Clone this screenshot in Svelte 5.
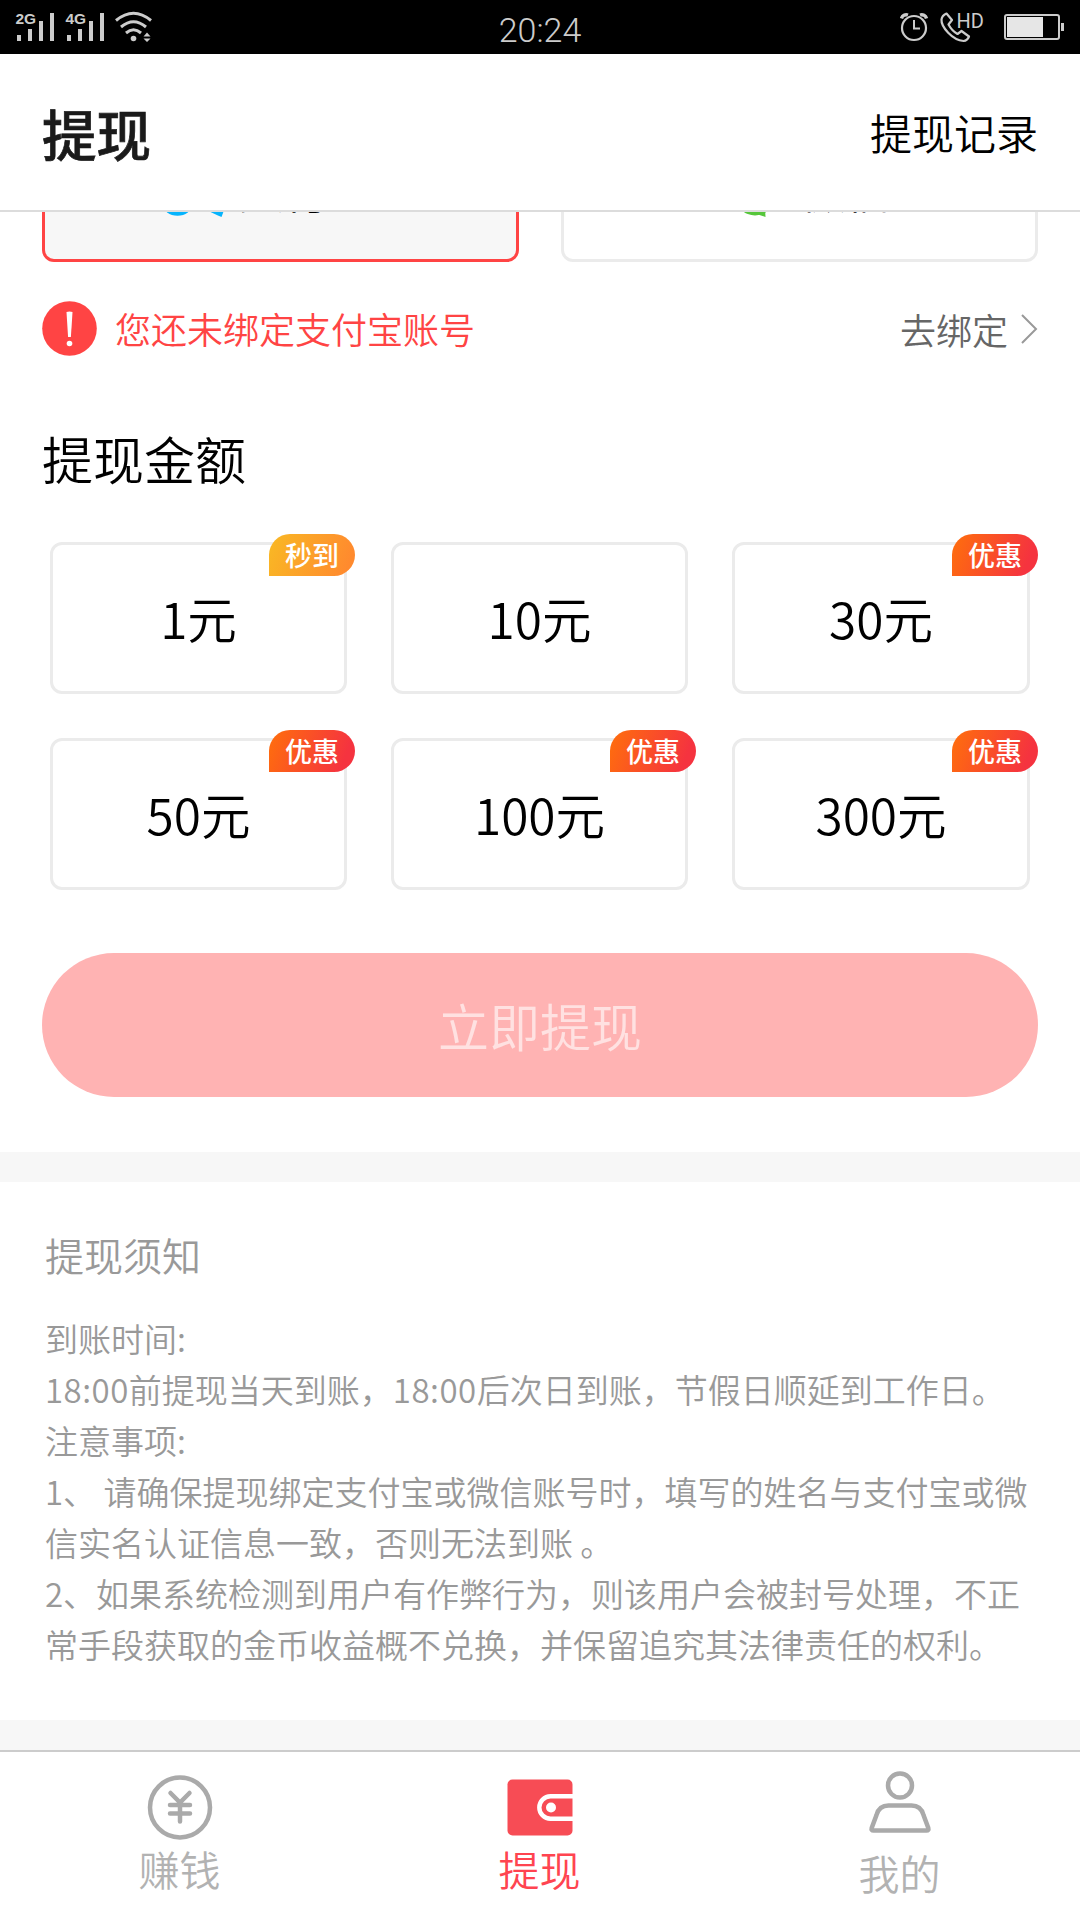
<script>
    const methods = [
        { id: 'alipay', label: '支付宝', active: true },
        { id: 'wechat', label: '微信', active: false }
    ];

    const amounts = [
        { value: 1, tag: '秒到', fast: true },
        { value: 10 },
        { value: 30, tag: '优惠' },
        { value: 50, tag: '优惠' },
        { value: 100, tag: '优惠' },
        { value: 300, tag: '优惠' }
    ];

    const notes = [
        '到账时间:',
        '18:00前提现当天到账，18:00后次日到账，节假日顺延到工作日。',
        '注意事项:',
        '1、 请确保提现绑定支付宝或微信账号时，填写的姓名与支付宝或微',
        '信实名认证信息一致，否则无法到账 。',
        '2、如果系统检测到用户有作弊行为，则该用户会被封号处理，不正',
        '常手段获取的金币收益概不兑换，并保留追究其法律责任的权利。'
    ];

    // clock times are set a little wider than the rest of the line
    const splitTimes = (line) => line.split(/(\d+:\d+)/);
</script>

<div class="screen">
    <div class="status">
        <svg class="status-left" width="160" height="54" viewBox="0 0 160 54" fill="#ccc">
            <text x="15.500" y="24" class="net">2G</text>
            <rect x="17" y="35" width="4" height="6" />
            <rect x="28" y="29" width="4" height="12" />
            <rect x="39" y="21" width="4" height="20" />
            <rect x="50" y="13" width="4" height="28" />
            <text x="65.500" y="24" class="net">4G</text>
            <rect x="67" y="35" width="4" height="6" />
            <rect x="78" y="29" width="4" height="12" />
            <rect x="89" y="21" width="4" height="20" />
            <rect x="100" y="13" width="4" height="28" />
            <g fill="none" stroke="#ccc" stroke-width="3">
                <path d="M116 20.500Q133.500 6 151 20.500" />
                <path d="M121 27Q133.500 16.500 146 27" />
                <path d="M126 33Q133.500 26.500 141 33" />
            </g>
            <circle cx="133.500" cy="38.500" r="2.800" />
            <path d="M143.500 36.500l3.500-4 3.500 4zM143.500 38.500h7l-3.500 3.500z" />
        </svg>
        <span class="clock">20:24</span>
        <svg class="status-right" width="180" height="54" viewBox="900 0 180 54" fill="none" stroke="#ccc">
            <circle cx="914" cy="28" r="12" stroke-width="2.200" />
            <path d="M914 20v8.500h6" stroke-width="2" />
            <path d="M901.500 18.500a5 5 0 0 1 6.500-3.500M920 15a5 5 0 0 1 6.500 3.500" stroke-width="3.400" />
            <path d="M946.500 13.500l5.500 6.500-3.500 4.500q3.500 6.500 9 9.500l4-3 7.500 5.500q-1.500 4-5.500 4.500c-11-1-22.500-14-22-21.500q.5-4 5-6z" stroke-width="2.200" stroke-linejoin="round" />
            <text x="956.500" y="27.500" class="hd">HD</text>
            <rect x="1005" y="15" width="54" height="24" rx="2" stroke-width="2" />
            <rect x="1007" y="17" width="36" height="20" fill="#e6e6e6" stroke="none" />
            <rect x="1061" y="23" width="3" height="8" fill="#ccc" stroke="none" />
        </svg>
    </div>

    <header>
        <h1>提现</h1>
        <span class="record">提现记录</span>
    </header>

    <main>
        <div class="methods">
            {#each methods as method}
                <div class="method {method.id}" class:active={method.active}>
                    {#if method.id === 'alipay'}
                        <svg width="63" height="54" viewBox="0 0 63 54">
                            <g fill="none" stroke="#06b4fd" stroke-width="5">
                                <path d="M8 9h46M31 1v18M12 19h36q-4 14-16 24" />
                            </g>
                            <ellipse cx="14.500" cy="41.700" rx="14.500" ry="11" fill="#06b4fd" />
                            <path d="M24 33l38 11.500L58.500 54Q46 49 30 39z" fill="#06b4fd" />
                        </svg>
                    {:else}
                        <svg width="63" height="54" viewBox="0 0 63 54" fill="#56c63b">
                            <ellipse cx="23" cy="20" rx="22" ry="18" />
                            <ellipse cx="43" cy="34" rx="19" ry="18.500" />
                            <path d="M43 50l10-5 .5 9-6-2z" />
                        </svg>
                    {/if}
                    <span class="label">{method.label}</span>
                </div>
            {/each}
        </div>

        <div class="bind">
            <svg width="55" height="55" viewBox="0 0 55 55">
                <circle cx="27.500" cy="27.500" r="27.300" fill="#ff4444" />
                <path d="M24.500 11q3-1 6 0l-1.600 25h-2.800z" fill="#fff" />
                <circle cx="27.500" cy="42.500" r="2.800" fill="#fff" />
            </svg>
            <span class="warn">您还未绑定支付宝账号</span>
            <span class="go">去绑定</span>
            <svg width="18" height="32" viewBox="0 0 18 32" fill="none" stroke="#999" stroke-width="2">
                <path d="M2 3l14 14L2 31" />
            </svg>
        </div>

        <h2>提现金额</h2>
        <div class="amounts">
            {#each amounts as amount}
                <div class="amount">
                    {amount.value}元
                    {#if amount.tag}
                        <span class="tag" class:fast={amount.fast}>{amount.tag}</span>
                    {/if}
                </div>
            {/each}
        </div>

        <button class="submit">立即提现</button>

        <section class="notice">
            <h3>提现须知</h3>
            {#each notes as line}
                <p>{#each splitTimes(line) as part, i}<span class:time={i % 2 === 1}>{part}</span>{/each}</p>
            {/each}
        </section>
    </main>

    <nav>
        <div class="tab">
            <svg width="66" height="66" viewBox="0 0 66 66" fill="none" stroke="#aaa" stroke-width="4.500">
                <circle cx="33" cy="32.500" r="30" />
                <path d="M23.500 18L33 27.500l9.500-9.500M33 27.500v19M23 30h20M23 38.500h20" stroke-linecap="round" />
            </svg>
            <span>赚钱</span>
        </div>
        <div class="tab current">
            <svg width="66" height="66" viewBox="0 0 66 66">
                <rect x=".5" y="4.500" width="65" height="56" rx="5" fill="#f74c55" />
                <path d="M66 21.300H43.500a11.200 11.200 0 0 0 0 22.400H66" fill="none" stroke="#fff" stroke-width="4.400" />
                <circle cx="44" cy="32.500" r="5" fill="#fff" />
            </svg>
            <span>提现</span>
        </div>
        <div class="tab mine">
            <svg width="66" height="66" viewBox="0 0 66 66" fill="none" stroke="#aaa" stroke-width="4.500">
                <circle cx="33" cy="15.500" r="12" />
                <path d="M21.500 35.500h23c6.500 0 10.500 4 12 9.500L61.300 58q.7 2.500-1.800 2.500h-53q-2.500 0-1.800-2.500L9.500 45c1.500-5.500 5.500-9.500 12-9.500z" />
            </svg>
            <span>我的</span>
        </div>
    </nav>
</div>

<style>
    :global(body) {
        margin: 0;
        background: #fff;
    }

    .screen {
        width: 1080px;
        height: 1920px;
        overflow: hidden;
        display: flex;
        flex-direction: column;
        box-sizing: border-box;
        font-family: "Noto Sans CJK SC", sans-serif;
        font-weight: 350;
        color: #000;
        background: #fff;
    }

    h1, h2, h3, p {
        margin: 0;
        font-weight: inherit;
    }

    svg {
        display: block;
        flex: none;
    }

    .status {
        flex: none;
        height: 54px;
        display: grid;
        grid-template-columns: 1fr auto 1fr;
        background: #000;
    }

    .status-right {
        justify-self: end;
    }

    .clock {
        font: 300 34px/60px Roboto, sans-serif;
        color: #ccc;
    }

    .net {
        font: bold 15.5px "Liberation Sans", sans-serif;
    }

    .hd {
        font: 400 20px Roboto, sans-serif;
        fill: #ccc;
        stroke: none;
    }

    header {
        flex: none;
        height: 154px;
        padding: 2px 42px 0;
        display: flex;
        align-items: center;
        justify-content: space-between;
        border-bottom: 2px solid #dcdcdc;
    }

    h1 {
        font-size: 54.5px;
        font-weight: 500;
        line-height: 80px;
        color: #1a1a1a;
        -webkit-text-stroke: 0.7px #1a1a1a;
    }

    .record {
        font-size: 42px;
        line-height: 60px;
        padding-bottom: 3px;
    }

    main {
        flex: none;
        height: 1538px;
        overflow: hidden;
    }

    .methods {
        display: grid;
        grid-template-columns: 1fr 1fr;
        gap: 42px;
        margin: -93px 42px 0;
    }

    .method {
        height: 142.5px;
        box-sizing: border-box;
        display: flex;
        align-items: center;
        border: 3px solid #ebebeb;
        border-radius: 12px;
        font-size: 45px;
    }

    .method.active {
        background: #f7f7f7;
        border-color: #ff4444;
    }

    .alipay {
        gap: 13px;
        padding-left: 118px;
    }

    .wechat {
        gap: 26px;
        padding-left: 148px;
    }

    .label {
        padding-bottom: 1px;
    }

    .bind {
        display: flex;
        align-items: center;
        height: 56px;
        margin: 38.5px 42px 0;
        font-size: 36px;
        line-height: 56px;
    }

    .warn {
        margin-left: 18px;
        color: #ff4444;
    }

    .go {
        margin-left: auto;
        margin-right: 12px;
        padding-top: 2px;
        color: #666;
    }

    h2 {
        margin: 67px 42px 0;
        font-size: 51px;
        line-height: 70px;
    }

    .amounts {
        display: grid;
        grid-template-columns: 297px 297px 298px;
        gap: 44px;
        margin: 49px 50px 0;
    }

    .amount {
        position: relative;
        height: 152px;
        box-sizing: border-box;
        border: 3px solid #ebebeb;
        border-radius: 12px;
        font-size: 49.5px;
        line-height: 145px;
        text-align: center;
    }

    .tag {
        position: absolute;
        top: -11px;
        right: -11px;
        width: 86px;
        height: 42px;
        border-radius: 21px 21px 21px 0;
        background: linear-gradient(110deg, #ff6f0c, #f5333f 85%);
        font-size: 27px;
        font-weight: 500;
        line-height: 42px;
        color: #fff;
    }

    .tag.fast {
        background: linear-gradient(110deg, #f9b924, #ff8a2e 90%);
    }

    .submit {
        display: block;
        width: 996px;
        height: 144px;
        margin: 63px auto 55px;
        padding: 0;
        border: none;
        border-radius: 72px;
        background: #ffb3b3;
        font-family: inherit;
        font-weight: inherit;
        font-size: 51px;
        color: #ffe1e1;
    }

    .notice {
        padding: 38px 45px 50px;
        border-top: 30px solid #f7f7f7;
        border-bottom: 30px solid #f7f7f7;
        color: #999;
    }

    h3 {
        margin-bottom: 25px;
        font-size: 39px;
        line-height: 68px;
    }

    p {
        font-size: 33px;
        line-height: 51px;
        white-space: pre;
    }

    .time {
        letter-spacing: 0.5px;
    }

    nav {
        flex: none;
        height: 170px;
        box-sizing: border-box;
        display: grid;
        grid-template-columns: repeat(3, 1fr);
        border-top: 2px solid #ccc;
    }

    .tab {
        display: flex;
        flex-direction: column;
        align-items: center;
        padding: 23px 1px 0 0;
        font-size: 41px;
        line-height: 54px;
        color: #b2b2b2;
    }

    .tab.current {
        color: #ff4450;
    }

    .tab.mine {
        padding-top: 18px;
    }

    .mine span {
        margin-top: 9px;
    }
</style>
